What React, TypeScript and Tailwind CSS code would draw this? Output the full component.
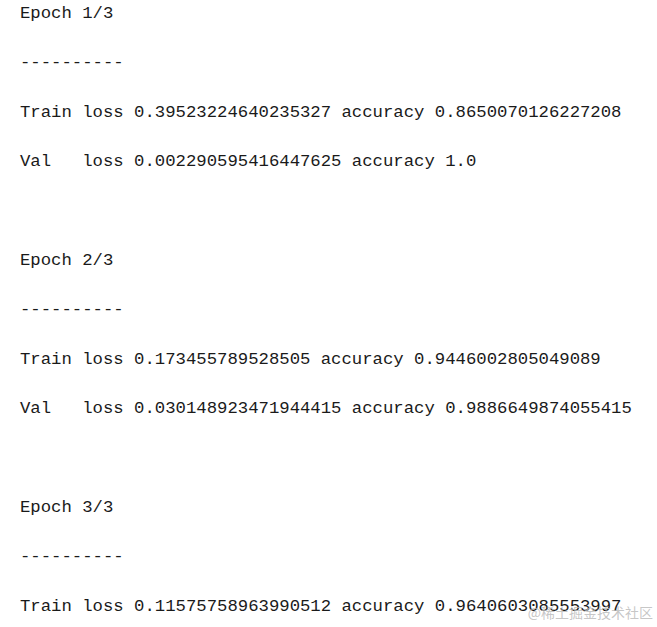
import React from 'react';

const epochs = [
  {
    title: 'Epoch 1/3',
    train: 'Train loss 0.39523224640235327 accuracy 0.8650070126227208',
    val: 'Val   loss 0.002290595416447625 accuracy 1.0',
  },
  {
    title: 'Epoch 2/3',
    train: 'Train loss 0.173455789528505 accuracy 0.9446002805049089',
    val: 'Val   loss 0.030148923471944415 accuracy 0.9886649874055415',
  },
  {
    title: 'Epoch 3/3',
    train: 'Train loss 0.11575758963990512 accuracy 0.9640603085553997',
    val: '',
  },
];

const Line: React.FC<{ text: string }> = ({ text }) => (
  <div className="h-[24px] leading-[24px] whitespace-pre">{text}</div>
);

export default function App() {
  const lines: string[] = [];
  epochs.forEach((e, i) => {
    lines.push(e.title, '----------', e.train);
    if (e.val) lines.push(e.val);
    if (i < epochs.length - 1) lines.push('');
  });

  return (
    <div className="relative w-[657px] h-[627px] overflow-hidden bg-white">
      <div
        className="flex flex-col gap-[25.4px] pt-[2px] pl-[20px] text-[17.3px] text-[#1a1a1a]"
        style={{ fontFamily: '"Liberation Mono", monospace' }}
      >
        {lines.map((l, i) => (
          <Line key={i} text={l} />
        ))}
      </div>
      <div
        className="absolute top-[602px] right-[4px] text-[14px] leading-[20px] text-[#b8b8b8]/80"
        style={{ fontFamily: '"Noto Sans CJK SC", sans-serif' }}
      >
        @稀土掘金技术社区
      </div>
    </div>
  );
}
